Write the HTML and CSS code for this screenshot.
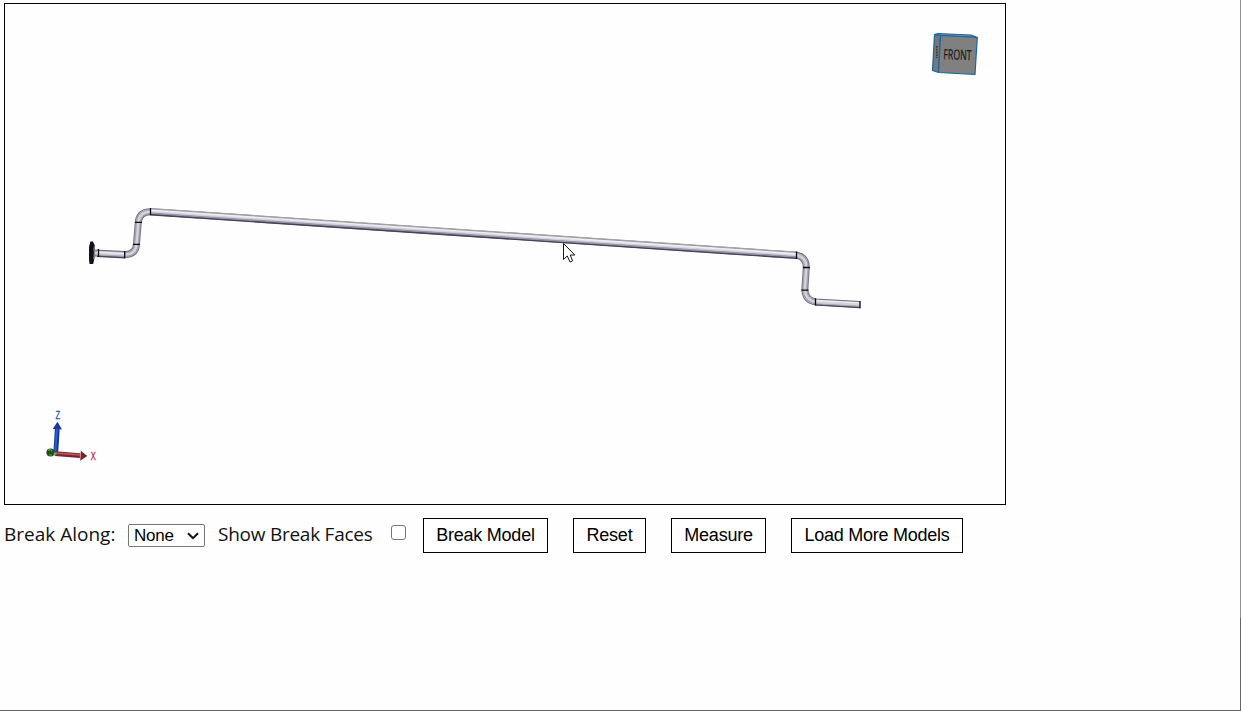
FILE: index.html
```html
<!DOCTYPE html>
<html lang="en">
<head>
<meta charset="utf-8">
<title>Break Model</title>
<link rel="stylesheet" href="styles.css">
</head>
<body>
<main class="page">
  <div class="viewer">
    <svg class="scene" viewBox="5 4 1000 500" width="1000" height="500">
      <defs>
        <path id="pipe" d="M95 253 L125 254.5 Q136 254.5 136.5 244 L138.3 222 Q139.5 211.5 151 211.7 L797 255.3 Q806 257 806.3 267 L804.8 290 Q805.5 300.5 816 302 L860 304.6"/>
      </defs>
      <!-- pipe, shaded from its outline inward -->
      <g fill="none" stroke-linejoin="round">
        <use href="#pipe" stroke="#737184" stroke-width="7"/>
        <use href="#pipe" stroke="#a5a4b3" stroke-width="5.2"/>
        <use href="#pipe" stroke="#d4d3dc" stroke-width="2.4"/>
        <path d="M151 208.6 L797 252.2" stroke="#a4a4a6" stroke-width="1.2"/>
        <path d="M151 210.3 L797 253.9" stroke="#eeeef2" stroke-width="1.6"/>
        <path d="M151 213.2 L797 256.8" stroke="#9795a5" stroke-width="1.2"/>
        <path d="M151 214.8 L797 258.4" stroke="#45425a" stroke-width="1.4"/>
        <path d="M97 252 L125 253.4 M816 300.5 L860 303.1" stroke="#ededf1" stroke-width="1.5"/>
        <path d="M97 256.4 L125 257.8 M816 305 L860 307.6" stroke="#494659" stroke-width="1.2"/>
      </g>
      <g stroke="#08080c" stroke-width="1.3">
        <path d="M98.5 249V257 M124.7 251V258.3 M133 244.3h7 M135 222.3h7 M150.5 208V215.3 M796.5 251.5V259 M803 267.5h7 M801.5 290.2h7 M815.5 298.3V305.6 M860 301V308.3"/>
      </g>
      <path d="M90.4 241.5h2.5l1.7 3.5v12l-1.4 7h-3.6l-.6-4v-13Z" fill="#11121c"/>
      <path d="M93.7 247.5Q94.8 252 93.7 259" fill="none" stroke="#8f8e98" stroke-width=".8"/>
      <!-- view cube -->
      <g stroke="#1767a0" stroke-width="1.2" stroke-linejoin="round">
        <path d="M934.5 34.5 L940.5 35.5 L938.5 72.5 L932.5 70.5Z" fill="#757779"/>
        <path d="M934.5 34.5 L938 33.5 L971 35 L977.3 37.5 L940.5 35.5Z" fill="#848688"/>
        <path d="M940.5 35.5 L977.3 37.5 L975 74.5 L938.5 72.5Z" fill="#808080"/>
      </g>
      <path d="M936.8 46v12" stroke="#383b3d" stroke-width="1.7" stroke-dasharray="1.8 1"/>
      <text class="cube-label" transform="translate(943.3 59.2) rotate(2)" textLength="28" lengthAdjust="spacingAndGlyphs">FRONT</text>
      <!-- axis triad -->
      <circle cx="50.5" cy="452.5" r="4.1" fill="#254a20"/>
      <path d="M48 450.5q3-2 4 1M49 455h3" fill="none" stroke="#58a83c" stroke-width="1.2"/>
      <path d="M55.7 453.5 L57.3 429" stroke="#17378f" stroke-width="4.8"/>
      <path d="M55.3 453 L56.9 429" stroke="#2c5dd5" stroke-width="2"/>
      <path d="M57.5 421.7 L62 429.5 L52.6 429Z" fill="#173a98"/>
      <path d="M55 453.7 L80 455.6" stroke="#782532" stroke-width="4.8"/>
      <path d="M56 453.1 L80 454.9" stroke="#bd515c" stroke-width="1.8"/>
      <path d="M87.3 456 L80.2 460.8 L80.8 450.7Z" fill="#7d202b"/>
      <circle cx="55" cy="453.7" r="1.5" fill="#52b537"/>
      <text class="axis axis-z" x="55.6" y="419" textLength="4.6" lengthAdjust="spacingAndGlyphs">Z</text>
      <text class="axis axis-x" x="90.8" y="460" textLength="5" lengthAdjust="spacingAndGlyphs">X</text>
      <!-- pointer -->
      <path d="M563.5 243.5V259.5L567.3 256L570 262L572.6 260.8L570.2 255H574.8Z" fill="#fff" stroke="#15151d" stroke-linejoin="round"/>
    </svg>
  </div>
  <div class="toolbar">
    <label class="label label-axis" for="axis">Break Along:</label>
    <div class="select">
      <span id="axis">None</span>
      <svg width="12" height="8" viewBox="0 0 12 8"><path d="M1 1.3 L6 6.2 L11 1.3" fill="none" stroke="#111" stroke-width="2"/></svg>
    </div>
    <label class="label label-faces" for="faces">Show Break Faces</label>
    <input class="check" id="faces" type="checkbox">
    <div class="buttons">
      <button class="button break">Break Model</button>
      <button class="button reset">Reset</button>
      <button class="button measure">Measure</button>
      <button class="button load">Load More Models</button>
    </div>
  </div>
</main>
</body>
</html>
```
FILE: styles.css
```css
* { box-sizing: border-box; }
body { margin: 0; background: #fefefe; color: #111; overflow: hidden; }
.page {
  width: 1241px;
  height: 711px;
  padding: 3px 0 0 4px;
  border-right: 1px solid;
  border-bottom: 1px solid;
  border-image: linear-gradient(#929292 87%, #666 87%) 1;
}
.viewer { width: 1002px; height: 502px; border: 1px solid #000; }
.scene { display: block; }
.cube-label { font: 14px "Open Sans", sans-serif; fill: #151515; stroke: #151515; stroke-width: .2; }
.axis { font: 10px "Liberation Sans", sans-serif; stroke-width: .3; }
.axis-z { fill: #2456b8; stroke: #2456b8; }
.axis-x { fill: #b22c3b; stroke: #b22c3b; }
.toolbar { display: flex; align-items: flex-start; padding-top: 13px; }
.label { font: 19px/32px "Open Sans", sans-serif; white-space: nowrap; }
.label-axis { width: 124px; letter-spacing: 0; }
.label-faces { width: 173px; margin-left: 13px; letter-spacing: -.25px; }
.select {
  display: flex;
  align-items: center;
  justify-content: space-between;
  width: 77px;
  height: 23px;
  margin-top: 6px;
  padding: 0 5px;
  border: 1px solid #767676;
  border-radius: 2px;
  background: #fff;
  color: #000;
  font: 17px/21px "Liberation Sans", sans-serif;
  letter-spacing: -.2px;
}
.check {
  appearance: none;
  width: 15px;
  height: 15px;
  margin: 7px 0 0;
  border: 1px solid #767676;
  border-radius: 3px;
  background: #fff;
}
.buttons { display: flex; gap: 25px; margin-left: 17px; }
.button {
  height: 35px;
  padding: 0 0 1px;
  border: 1px solid #000;
  background: #fff;
  color: #000;
  font: 18px/32px "Liberation Sans", sans-serif;
  letter-spacing: -.25px;
  white-space: nowrap;
}
.break { width: 125px; }
.reset { width: 73px; }
.measure { width: 95px; }
.load { width: 172px; }
```
